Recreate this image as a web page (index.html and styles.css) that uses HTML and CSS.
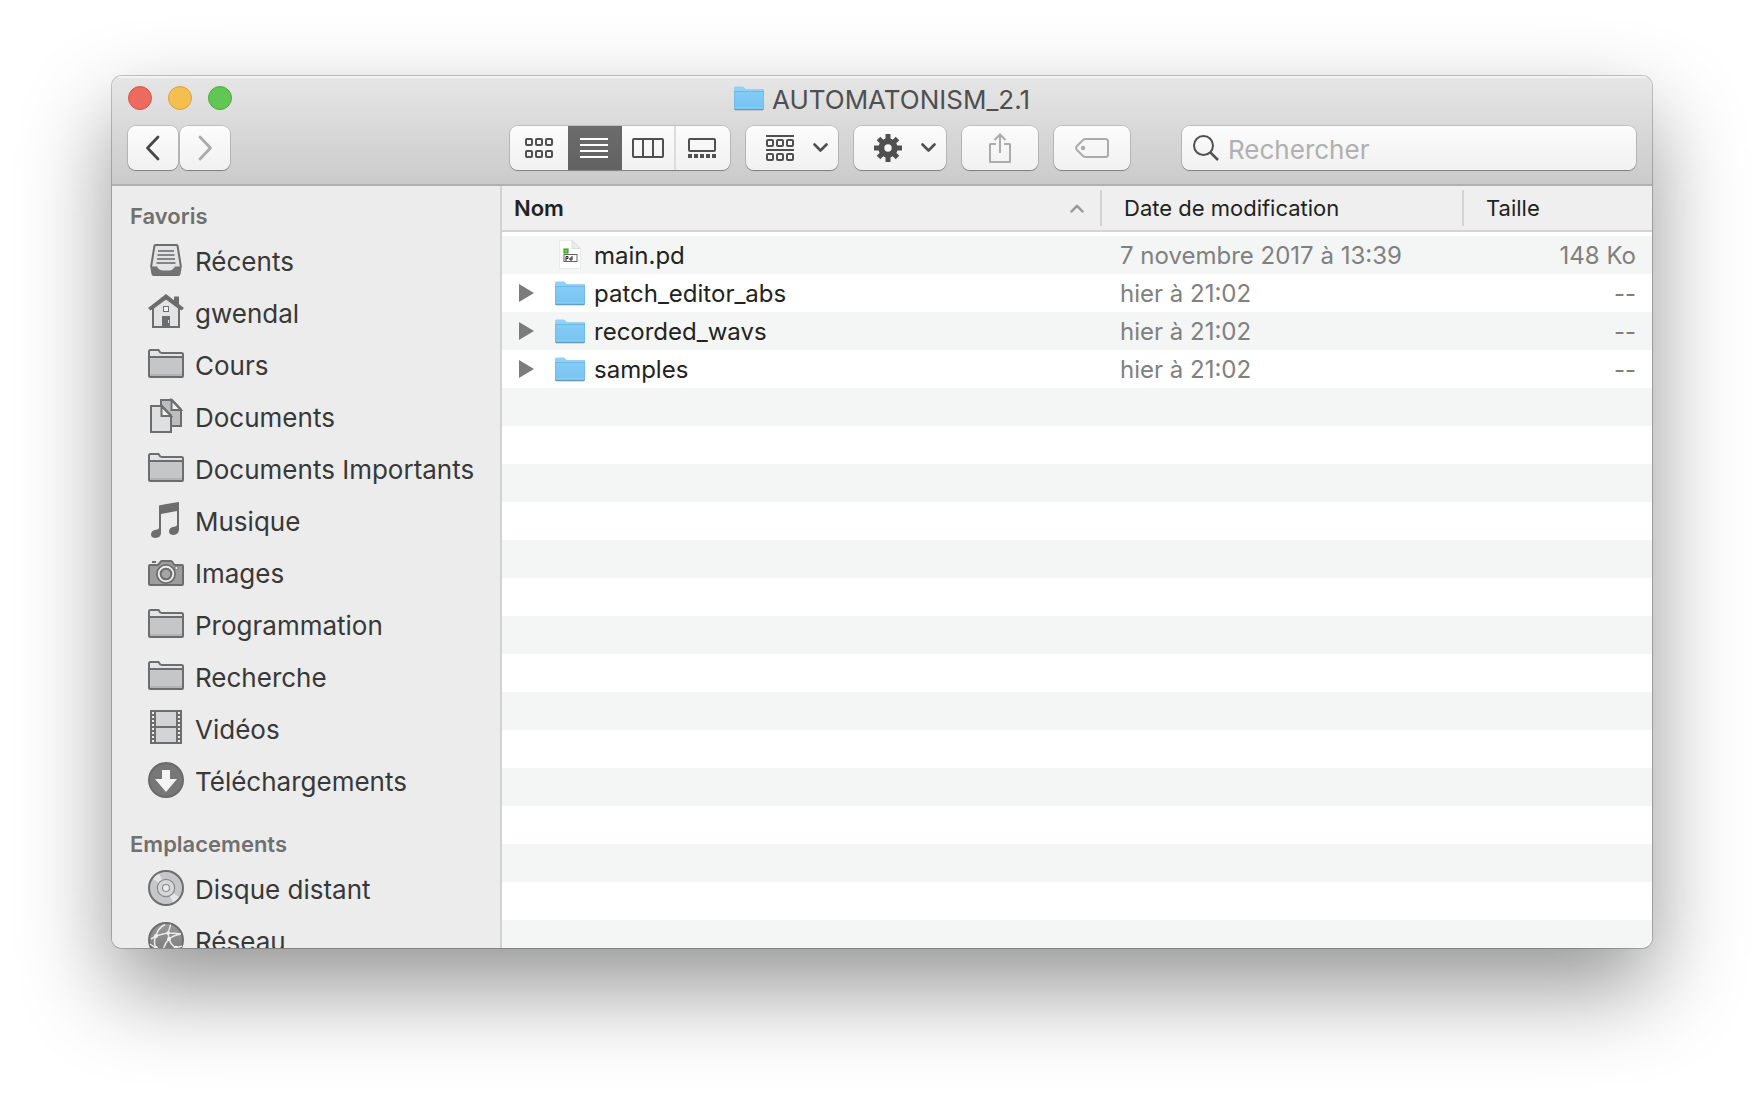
FILE: index.html
```html
<!DOCTYPE html>
<html lang="fr">
<head>
<meta charset="utf-8">
<meta name="viewport" content="width=device-width, initial-scale=1">
<title>AUTOMATONISM_2.1</title>
<link rel="stylesheet" href="styles.css">
</head>
<body>
<svg class="defs" aria-hidden="true">
  <defs>
    <linearGradient id="blue" x1="0" y1="0" x2="0" y2="1"><stop offset="0" stop-color="#85cbf6"/><stop offset="1" stop-color="#77c3f0"/></linearGradient>
    <linearGradient id="steel" x1="0" y1="0" x2="0" y2="1"><stop offset="0" stop-color="#999"/><stop offset="1" stop-color="#777"/></linearGradient>
    <symbol id="folder-blue" viewBox="0 0 30 25">
      <path d="M0 2Q0 .5 1.500 .5H8.500Q9.500 .5 10 1.200L11.500 3H29Q30 3 30 4V23H0Z" fill="#93d0f3"/>
      <path d="M0 5.500H30V22.500Q30 24 29 24H1Q0 24 0 22.500Z" fill="url(#blue)"/>
      <path d="M0 5.500H30" stroke="#6db9e6"/>
      <path d="M.5 5V23M29.500 4V23" stroke="#70b8e4" opacity=".7"/>
      <path d="M1 21.500H29" stroke="#92d3f8" opacity=".7"/>
      <path d="M.5 23.500H29.500" stroke="#5d9fc9"/>
      <path d="M1 24.500H29" stroke="#000" opacity=".12"/>
    </symbol>
    <symbol id="folder" viewBox="0 0 36 36">
      <path d="M1 30V5.500Q1 4 2.500 4H10.500L13.500 7H33.500Q35 7 35 8.500V30Q35 31 34 31H2Q1 31 1 30Z" fill="#e3e4e5"/>
      <path d="M1 11H35V31H1Z" fill="#c5c6c8"/>
      <path d="M2 29H34" stroke="#b3b4b6" stroke-width="2"/>
      <path d="M1 30V5.500Q1 4 2.500 4H10.500Q12 7 13.500 7H33.500Q35 7 35 8.500V30Q35 31 34 31H2Q1 31 1 30ZM1 11H35" fill="none" stroke="#6d6d6d" stroke-width="2"/>
    </symbol>
    <symbol id="chevron" viewBox="0 0 15 10"><path d="M1.500 1.500L7.500 7.500L13.500 1.500" fill="none" stroke="#505050" stroke-width="2.600" stroke-linecap="round" stroke-linejoin="round"/></symbol>
    <symbol id="triangle" viewBox="0 0 15 18"><path d="M0 0L15 9L0 18Z" fill="#7c7c7c"/></symbol>
  </defs>
</svg>

<main class="window">
  <header class="chrome">
    <div class="titlebar">
      <div class="lights">
        <button class="light red" aria-label="Fermer"></button>
        <button class="light yellow" aria-label="Réduire"></button>
        <button class="light green" aria-label="Agrandir"></button>
      </div>
      <h1 class="title"><svg width="30" height="25" aria-hidden="true"><use href="#folder-blue"/></svg><span class="label">AUTOMATONISM_2.1</span></h1>
    </div>
    <div class="toolbar">
      <nav class="history" aria-label="Historique">
        <button class="btn nav-btn" aria-label="Précédent"><svg width="16" height="26" viewBox="0 0 16 26" fill="none" stroke="#484848" stroke-width="2.800" stroke-linecap="round" stroke-linejoin="round"><path d="M13 2L2.500 13L13 24"/></svg></button>
        <button class="btn nav-btn" aria-label="Suivant"><svg width="16" height="26" viewBox="0 0 16 26" fill="none" stroke="#ababab" stroke-width="2.800" stroke-linecap="round" stroke-linejoin="round"><path d="M3 2L13.500 13L3 24"/></svg></button>
      </nav>
      <div class="tools">
        <div class="btn views" role="group" aria-label="Présentation">
          <button class="view" aria-label="Icônes"><svg width="28" height="20" fill="none" stroke="#505050" stroke-width="2"><rect x="1" y="1" width="6" height="6" rx="1"/><rect x="11" y="1" width="6" height="6" rx="1"/><rect x="21" y="1" width="6" height="6" rx="1"/><rect x="1" y="13" width="6" height="6" rx="1"/><rect x="11" y="13" width="6" height="6" rx="1"/><rect x="21" y="13" width="6" height="6" rx="1"/></svg></button>
          <button class="view selected" aria-label="Liste" aria-pressed="true"><svg width="28" height="20" stroke="#fff" stroke-width="2"><path d="M0 1H28M0 7H28M0 13H28M0 19H28"/></svg></button>
          <button class="view divided" aria-label="Colonnes"><svg width="32" height="20" fill="none" stroke="#505050" stroke-width="2"><rect x="1" y="1" width="30" height="18" rx="1"/><path d="M11 1V19M21 1V19"/></svg></button>
          <button class="view" aria-label="Galerie"><svg width="28" height="20" fill="none" stroke="#505050" stroke-width="2"><rect x="1" y="1" width="26" height="12" rx="1"/><path d="M0 18H28" stroke-width="4" stroke-dasharray="4 2"/></svg></button>
        </div>
        <button class="btn menu-btn" aria-label="Grouper"><svg width="28" height="26" fill="none" stroke="#505050" stroke-width="2"><path d="M0 1H28M0 15H28"/><rect x="1" y="5" width="6" height="6" rx="1"/><rect x="11" y="5" width="6" height="6" rx="1"/><rect x="21" y="5" width="6" height="6" rx="1"/><rect x="1" y="19" width="6" height="6" rx="1"/><rect x="11" y="19" width="6" height="6" rx="1"/><rect x="21" y="19" width="6" height="6" rx="1"/></svg><svg width="15" height="10"><use href="#chevron"/></svg></button>
        <button class="btn menu-btn" aria-label="Actions"><svg width="28" height="28" viewBox="-14 -14 28 28"><g stroke="#505050" stroke-width="5"><path d="M0 -14V-8M0 14V8M-14 0H-8M14 0H8"/><path d="M-9.500 -9.500L-6 -6M9.500 9.500L6 6M-9.500 9.500L-6 6M9.500 -9.500L6 -6"/></g><circle r="6.700" fill="none" stroke="#505050" stroke-width="6"/></svg><svg width="15" height="10"><use href="#chevron"/></svg></button>
        <button class="btn action-btn" aria-label="Partager"><svg width="24" height="30" viewBox="0 0 24 30" fill="none" stroke="#ababab" stroke-width="2"><path d="M8 11H2.500Q2 11 2 11.500V28.500Q2 29 2.500 29H21.500Q22 29 22 28.500V11.500Q22 11 21.500 11H16M12 20V2M6.500 7L12 1.500L17.500 7"/></svg></button>
        <button class="btn action-btn" aria-label="Modifier les tags"><svg width="34" height="20" viewBox="0 0 34 20"><path d="M10.500 1H30.500Q33 1 33 3.500V16.500Q33 19 30.500 19H10.500Q9 19 8 18L2 12Q.2 10 2 8L8 2Q9 1 10.500 1Z" fill="none" stroke="#ababab" stroke-width="2"/><circle cx="8" cy="10" r="2.200" fill="#ababab"/></svg></button>
      </div>
      <label class="btn search">
        <svg width="26" height="26" viewBox="0 0 26 26" fill="none" stroke="#505050" stroke-width="2" aria-hidden="true"><circle cx="10.500" cy="10.500" r="9.500"/><path d="M17.300 17.300L25 25" stroke-width="2.500"/></svg>
        <input type="search" placeholder="Rechercher" aria-label="Rechercher">
      </label>
    </div>
  </header>

  <div class="panes">
    <aside class="sidebar">
      <h2 class="section">Favoris</h2>
      <ul class="places">
        <li><a class="place" href="#recents"><svg width="36" height="36"><path d="M7.500 3H28.500Q29.500 3 29.600 4L32.800 24L31.500 32Q31.300 33 30.300 33H5.700Q4.700 33 4.500 32L3.200 24L6.400 4Q6.500 3 7.500 3Z" fill="#e2e3e4" stroke="#6d6d6d" stroke-width="2"/><path d="M10 9H26M9.500 13H26.500M9 17H27M8.500 21H27.500" stroke="#858585" stroke-width="2"/><path d="M3 24.500H9Q11 28.500 15 28.500H21Q25 28.500 27 24.500H33L31.500 33H4.500Z" fill="#737373"/></svg><span class="label">Récents</span></a></li>
        <li><a class="place" href="#gwendal"><svg width="36" height="36"><path d="M26 2.500H31V12L26 8Z" fill="#6d6d6d"/><path d="M5 14L18 4L31 14V33H5Z" fill="#e2e3e4" stroke="#6d6d6d" stroke-width="2"/><path d="M0 14L18 0L36 14L33.500 16.500L18 5.500L2.500 16.500Z" fill="#6d6d6d"/><rect x="15.500" y="12.500" width="5" height="5" fill="#f4f4f4" stroke="#6d6d6d"/><path d="M14 22H22V34H14Z" fill="#6d6d6d"/><path d="M20.500 26V29" stroke="#e2e3e4"/></svg><span class="label">gwendal</span></a></li>
        <li><a class="place" href="#cours"><svg width="36" height="36"><use href="#folder"/></svg><span class="label">Cours</span></a></li>
        <li><a class="place" href="#documents"><svg width="36" height="36" stroke="#6d6d6d" stroke-width="2"><path d="M13 2H24L33 11.500V28H13Z" fill="#bcbdbf"/><path d="M23.500 2V12H33Z" fill="#f0f0f0"/><path d="M3 8H14L23 17.500V34H3Z" fill="#dedfe1"/><path d="M13.500 8V18H23Z" fill="#f0f0f0"/></svg><span class="label">Documents</span></a></li>
        <li><a class="place" href="#documents-importants"><svg width="36" height="36"><use href="#folder"/></svg><span class="label">Documents Importants</span></a></li>
        <li><a class="place" href="#musique"><svg width="36" height="36" fill="#6d6d6d"><path d="M11 4Q11 3.400 11.600 3.200L30.200 0Q31 0 31 .7V28H29V9L13 12V31H11Z"/><path d="M13 26V31.500Q12.600 35.500 7.500 36Q3 36 3 32.200Q3.200 28.500 8 27.700Q10.500 27.500 11 26Z"/><path d="M31 22V28Q30.600 32.500 25.500 33Q21 33 21 29.200Q21.200 25.500 26 24.700Q28.500 24.500 29 23Z"/></svg><span class="label">Musique</span></a></li>
        <li><a class="place" href="#images"><svg width="36" height="36"><path d="M4 8H8" stroke="#6d6d6d" stroke-width="2"/><path d="M2 11H9.500Q11 10.500 12 8.500Q12.700 7 14 7H22.500Q24 7 24.700 8.500Q25.500 10.500 27 11H34Q35 11 35 12V30Q35 31 34 31H2Q1 31 1 30V12Q1 11 2 11Z" fill="#9d9d9d" stroke="#6d6d6d" stroke-width="2"/><circle cx="18" cy="20" r="9" fill="#9d9d9d" stroke="#6d6d6d" stroke-width="2"/><circle cx="18" cy="20" r="7.200" fill="#9d9d9d" stroke="#ededed" stroke-width="2"/><circle cx="18" cy="20" r="5.300" fill="#a5a5a5" stroke="#6d6d6d" stroke-width="2"/><circle cx="28.500" cy="14" r="1.700" fill="#ededed" stroke="#6d6d6d"/></svg><span class="label">Images</span></a></li>
        <li><a class="place" href="#programmation"><svg width="36" height="36"><use href="#folder"/></svg><span class="label">Programmation</span></a></li>
        <li><a class="place" href="#recherche"><svg width="36" height="36"><use href="#folder"/></svg><span class="label">Recherche</span></a></li>
        <li><a class="place" href="#videos"><svg width="36" height="36"><path d="M2 0H34V34H2Z" fill="#6d6d6d"/><path d="M8 2H28V16H8ZM8 18H28V32H8Z" fill="#d3d4d6"/><path d="M5 2V34M31 2V34" stroke="#ededed" stroke-width="2" stroke-dasharray="2 2"/></svg><span class="label">Vidéos</span></a></li>
        <li><a class="place" href="#telechargements"><svg width="36" height="36"><circle cx="18" cy="18" r="17" fill="#777" stroke="#6a6a6a" stroke-width="2"/><path d="M14 8H22V17H29L18 30L7 17H14Z" fill="#f4f4f4"/></svg><span class="label">Téléchargements</span></a></li>
      </ul>
      <h2 class="section later">Emplacements</h2>
      <ul class="places">
        <li><a class="place" href="#disque"><svg width="36" height="36"><circle cx="18" cy="18" r="17" fill="#c6c7c9" stroke="#6d6d6d" stroke-width="2"/><path d="M18 18L5 9A16 16 0 0 1 11 3.500ZM18 18L31 27A16 16 0 0 1 25 32.500Z" fill="#e6e6e7"/><circle cx="18" cy="18" r="8.700" fill="#d6d7d8" stroke="#8b8b8b" stroke-width="1.200"/><circle cx="18" cy="18" r="3.500" fill="#ededed" stroke="#8b8b8b" stroke-width="1.200"/></svg><span class="label">Disque distant</span></a></li>
        <li><a class="place" href="#reseau"><svg width="36" height="36"><circle cx="18" cy="18" r="17" fill="url(#steel)" stroke="#6d6d6d" stroke-width="2"/><g fill="none" stroke="#e9e9e9" stroke-width="1.500"><path d="M8 14Q10 6 17 2.500M8 14Q14 12 20 11Q27 11 33 12M20 11Q22 6 22.500 2.500M20 11L21 17Q23 23 28 26M21 17Q26 13 33 12M21 17Q15 23 14 34M8 14Q5 20 8 26L14 34M8 14L3 17M28 26L34 24M28 26Q24 31 18 34M8 26L2 22"/></g><g fill="#f0f0f0"><circle cx="8" cy="14" r="2"/><circle cx="20" cy="11" r="1.800"/><circle cx="21" cy="17" r="2"/><circle cx="8" cy="26" r="2"/><circle cx="28" cy="26" r="2.300"/></g></svg><span class="label">Réseau</span></a></li>
      </ul>
    </aside>

    <section class="listing" aria-label="Fichiers">
      <table class="files">
        <colgroup><col><col class="col-date"><col class="col-size"></colgroup>
        <thead>
          <tr>
            <th class="sorted" aria-sort="ascending"><div class="head head-name">Nom<svg width="14" height="9" viewBox="0 0 14 9" fill="none" stroke="#999" stroke-width="2.500" stroke-linecap="round" stroke-linejoin="round"><path d="M1.500 7.500L7 1.800L12.500 7.500"/></svg></div></th>
            <th><div class="head">Date de modification</div></th>
            <th><div class="head last">Taille</div></th>
          </tr>
        </thead>
        <tbody>
          <tr>
            <td class="name"><div class="file"><svg class="doc" width="24" height="30" viewBox="0 0 24 30"><path d="M1 1H14L23 10V29H1Z" fill="#000" opacity=".05"/><path d="M1.500 .5H14L22.500 9V28.500H1.500Z" fill="#fff" stroke="#ebebeb"/><path d="M14 .5V8.500H22.500Z" fill="#ececec" stroke="#dcdcdc"/><rect x="6" y="9" width="4" height="4" fill="#5ae030" stroke="#2f8a1a"/><rect x="6" y="14.500" width="13" height="7" fill="#fff" stroke="#666"/><path d="M8 21V16.500H10V18.500H8M14 16V20H12V18H14" fill="none" stroke="#222"/></svg><span class="label">main.pd</span></div></td>
            <td class="meta">7 novembre 2017 à 13:39</td><td class="meta size">148 Ko</td>
          </tr>
          <tr>
            <td class="name"><div class="file"><button class="disclose" aria-label="Ouvrir patch_editor_abs"><svg width="15" height="18"><use href="#triangle"/></svg></button><svg width="30" height="25"><use href="#folder-blue"/></svg><span class="label">patch_editor_abs</span></div></td>
            <td class="meta">hier à 21:02</td><td class="meta size">--</td>
          </tr>
          <tr>
            <td class="name"><div class="file"><button class="disclose" aria-label="Ouvrir recorded_wavs"><svg width="15" height="18"><use href="#triangle"/></svg></button><svg width="30" height="25"><use href="#folder-blue"/></svg><span class="label">recorded_wavs</span></div></td>
            <td class="meta">hier à 21:02</td><td class="meta size">--</td>
          </tr>
          <tr>
            <td class="name"><div class="file"><button class="disclose" aria-label="Ouvrir samples"><svg width="15" height="18"><use href="#triangle"/></svg></button><svg width="30" height="25"><use href="#folder-blue"/></svg><span class="label">samples</span></div></td>
            <td class="meta">hier à 21:02</td><td class="meta size">--</td>
          </tr>
        </tbody>
      </table>
    </section>
  </div>
</main>
</body>
</html>
```
FILE: styles.css
```css
* { box-sizing: border-box; }

body {
  margin: 0;
  height: 100vh;
  padding: 76px 112px 148px;
  background: #fff;
  color: #222;
  font-family: Inter, "Liberation Sans", sans-serif;
  font-size: 24px;
}

button {
  border: 0;
  padding: 0;
  background: none;
  font: inherit;
}

svg { display: block; flex: none; }
.defs { position: absolute; width: 0; height: 0; }

/* Text beside an icon sits slightly below the icon's middle */
.label { padding-top: 2px; }

.window {
  display: flex;
  flex-direction: column;
  height: 100%;
  border-radius: 10px;
  overflow: hidden;
  background: #fff;
  box-shadow: 0 0 0 1px rgba(0, 0, 0, .22), 0 40px 90px rgba(0, 0, 0, .42);
}

/* Title bar and toolbar */
.chrome {
  display: flex;
  flex-direction: column;
  gap: 6px;
  padding: 0 16px 14px;
  border-bottom: 2px solid #b0b0b0;
  background: linear-gradient(#e6e6e6, #cbcbcb);
  box-shadow: inset 0 2px #f3f3f3;
}

.titlebar {
  display: grid;
  grid-template-columns: 1fr auto 1fr;
  align-items: center;
  height: 44px;
}

.lights { display: flex; gap: 16px; }
.light { width: 24px; height: 24px; border-radius: 50%; border: 1px solid; }
.red { background: #ed6a5e; border-color: #d9544b; }
.yellow { background: #f5bf4f; border-color: #dba13a; }
.green { background: #61c654; border-color: #4fa73f; }

.title {
  display: flex;
  align-items: center;
  gap: 8px;
  margin: 0;
  color: #4f4f4f;
  font-size: 26px;
  font-weight: 400;
}

.toolbar { display: flex; }
.history { display: flex; gap: 2px; flex: 0 0 382px; }
.tools { display: flex; gap: 16px; margin-right: 52px; }

.btn {
  display: flex;
  align-items: center;
  height: 44px;
  border-radius: 8px;
  background: linear-gradient(#fcfcfc, #f1f1f1);
  box-shadow: 0 0 0 1px rgba(0, 0, 0, .12), 0 1px 1px rgba(0, 0, 0, .3);
}

.nav-btn { width: 50px; justify-content: center; }
.action-btn { width: 76px; justify-content: center; }
.menu-btn { width: 92px; justify-content: space-between; padding: 0 10px 0 20px; }

.view {
  display: flex;
  align-items: center;
  justify-content: center;
  width: 54px;
  height: 44px;
  border-right: 2px solid transparent;
}
.view:first-child { width: 58px; padding-left: 2px; }
.view.selected { border-right-color: #666; background: linear-gradient(#6c6c6c, #626262); }
.view.divided { border-right-color: #dcdcdc; }

.search { flex: 1; min-width: 0; gap: 9px; padding: 0 11px; }
.search input {
  flex: 1;
  min-width: 0;
  border: 0;
  padding: 2px 0 0;
  background: none;
  outline: 0;
  color: #333;
  font: inherit;
  font-size: 26px;
}
.search input::placeholder { color: #b0b0b0; opacity: 1; }

/* Sidebar */
.panes { display: flex; flex: 1; min-height: 0; }

.sidebar {
  flex: 0 0 390px;
  overflow: hidden;
  border-right: 2px solid #d2d2d2;
  background: #ececec;
}

.section {
  margin: 0;
  padding: 12px 18px 0;
  color: #707070;
  font-size: 22px;
  font-weight: 600;
  line-height: 36px;
}
.section.later { padding-top: 20px; }

.places { margin: 0; padding: 0; list-style: none; }
.place {
  display: flex;
  align-items: center;
  gap: 11px;
  height: 52px;
  padding-left: 36px;
  color: #383838;
  font-size: 26px;
  text-decoration: none;
  white-space: nowrap;
}

/* File list */
.listing {
  flex: 1;
  min-width: 0;
  overflow: hidden;
  background: repeating-linear-gradient(#f4f5f5 0 38px, #fff 38px 76px) 0 50px no-repeat;
}

.files { width: 100%; table-layout: fixed; border-collapse: collapse; }
.col-date { width: 362px; }
.col-size { width: 188px; }

.files th {
  padding: 0;
  background: #efefef;
  box-shadow: inset 0 -2px #d4d4d4;
  font-size: 22px;
  font-weight: 400;
  text-align: left;
}
.files .sorted { font-weight: 600; }

.head {
  display: flex;
  align-items: center;
  height: 36px;
  margin: 4px 0 6px;
  padding-left: 22px;
  border-right: 2px solid #d4d4d4;
}
.head-name { justify-content: space-between; padding: 0 16px 0 12px; }
.head.last { border-right: 0; }

.files tbody::before { content: ""; display: block; height: 4px; }
.files td { height: 38px; padding: 2px 0 0 18px; line-height: 36px; white-space: nowrap; }
.files .name { padding: 0 0 0 17px; }
.files .meta { color: #808080; }
.files .size { padding-right: 16px; text-align: right; }

.file { display: grid; grid-template-columns: 36px 39px 1fr; align-items: center; height: 38px; }
.doc { grid-column: 2; margin-left: 3px; }
```
